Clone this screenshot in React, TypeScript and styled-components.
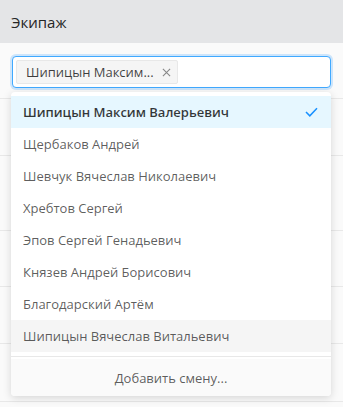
import React from "react";
import styled, { createGlobalStyle } from "styled-components";

const GlobalStyle = createGlobalStyle`
  html, body {
    margin: 0;
    padding: 0;
    background: #fafafa;
    font-family: "Open Sans", "Liberation Sans", sans-serif;
    -webkit-font-smoothing: antialiased;
  }
`;

const Page = styled.div`
  position: relative;
  width: 343px;
  height: 407px;
  overflow: hidden;
  background: #fafafa;
`;

const Header = styled.div`
  height: 43px;
  display: flex;
  align-items: center;
  padding: 0 11px;
  background: #e4e5e7;
  color: #262626;
  font-size: 15px;
  font-weight: 500;
`;

const FieldRow = styled.div`
  height: 56px;
  padding: 13px 12px 0 12px;
  box-sizing: border-box;
  border-bottom: 1px solid #e8e8e8;
`;

const BackRow = styled.div<{ $h: number }>`
  height: ${(p) => p.$h}px;
  box-sizing: border-box;
  border-bottom: 1px solid #e8e8e8;
`;

const Select = styled.div`
  height: 32px;
  box-sizing: border-box;
  border: 1px solid #40a9ff;
  border-radius: 4px;
  background: #fff;
  box-shadow: 0 0 0 2px rgba(24, 144, 255, 0.2);
  display: flex;
  align-items: center;
  padding: 0 3px;
`;

const Tag = styled.div`
  height: 24px;
  box-sizing: border-box;
  display: flex;
  align-items: center;
  gap: 8px;
  padding: 0 6px 0 9px;
  background: #f5f5f5;
  border: 1px solid #e8e8e8;
  border-radius: 2px;
  color: rgba(0, 0, 0, 0.75);
  font-size: 13px;
`;

const Close = styled.span`
  color: rgba(0, 0, 0, 0.45);
  display: flex;
`;

const Dropdown = styled.div`
  position: absolute;
  left: 11px;
  top: 92px;
  width: 320px;
  background: #fff;
  border-radius: 4px;
  box-shadow: 0 2px 8px rgba(0, 0, 0, 0.15);
  overflow: hidden;
`;

const List = styled.div`
  padding: 4px 0;
`;

const Option = styled.div<{ $selected?: boolean; $hover?: boolean }>`
  height: 32px;
  display: flex;
  align-items: center;
  justify-content: space-between;
  padding: 0 13px 0 12px;
  font-size: 13px;
  color: ${(p) => (p.$selected ? "rgba(0,0,0,0.78)" : "rgba(0,0,0,0.65)")};
  font-weight: ${(p) => (p.$selected ? 600 : 400)};
  background: ${(p) => (p.$selected ? "#e6f7ff" : p.$hover ? "#f5f5f5" : "#fff")};
`;

const Divider = styled.div`
  height: 1px;
  background: #e8e8e8;
  margin-bottom: 2px;
`;

const Footer = styled.div`
  height: 37px;
  display: flex;
  align-items: center;
  justify-content: center;
  background: #fafafa;
  color: rgba(0, 0, 0, 0.65);
  font-size: 13px;
`;

const people = [
  "Шипицын Максим Валерьевич",
  "Щербаков Андрей",
  "Шевчук Вячеслав Николаевич",
  "Хребтов Сергей",
  "Эпов Сергей Генадьевич",
  "Князев Андрей Борисович",
  "Благодарский Артём",
  "Шипицын Вячеслав Витальевич",
];

export default function App() {
  return (
    <Page>
      <GlobalStyle />
      <Header>Экипаж</Header>
      <FieldRow>
        <Select>
          <Tag>
            Шипицын Максим...
            <Close>
              <svg width="9" height="9" viewBox="0 0 10 10">
                <path d="M1 1 L9 9 M9 1 L1 9" stroke="currentColor" strokeWidth="1.2" fill="none" />
              </svg>
            </Close>
          </Tag>
        </Select>
      </FieldRow>
      <BackRow $h={57} />
      <BackRow $h={75} />
      <BackRow $h={56} />
      <BackRow $h={57} />
      <BackRow $h={58} />
      <Dropdown>
        <List>
          {people.map((name, i) => (
            <Option key={name} $selected={i === 0} $hover={i === people.length - 1}>
              {name}
              {i === 0 && (
                <svg width="13" height="10" viewBox="0 0 13 10">
                  <path d="M1 5 L4.8 8.8 L12 1.2" stroke="#1890ff" strokeWidth="1.5" fill="none" />
                </svg>
              )}
            </Option>
          ))}
        </List>
        <Divider />
        <Footer>Добавить смену...</Footer>
      </Dropdown>
    </Page>
  );
}
